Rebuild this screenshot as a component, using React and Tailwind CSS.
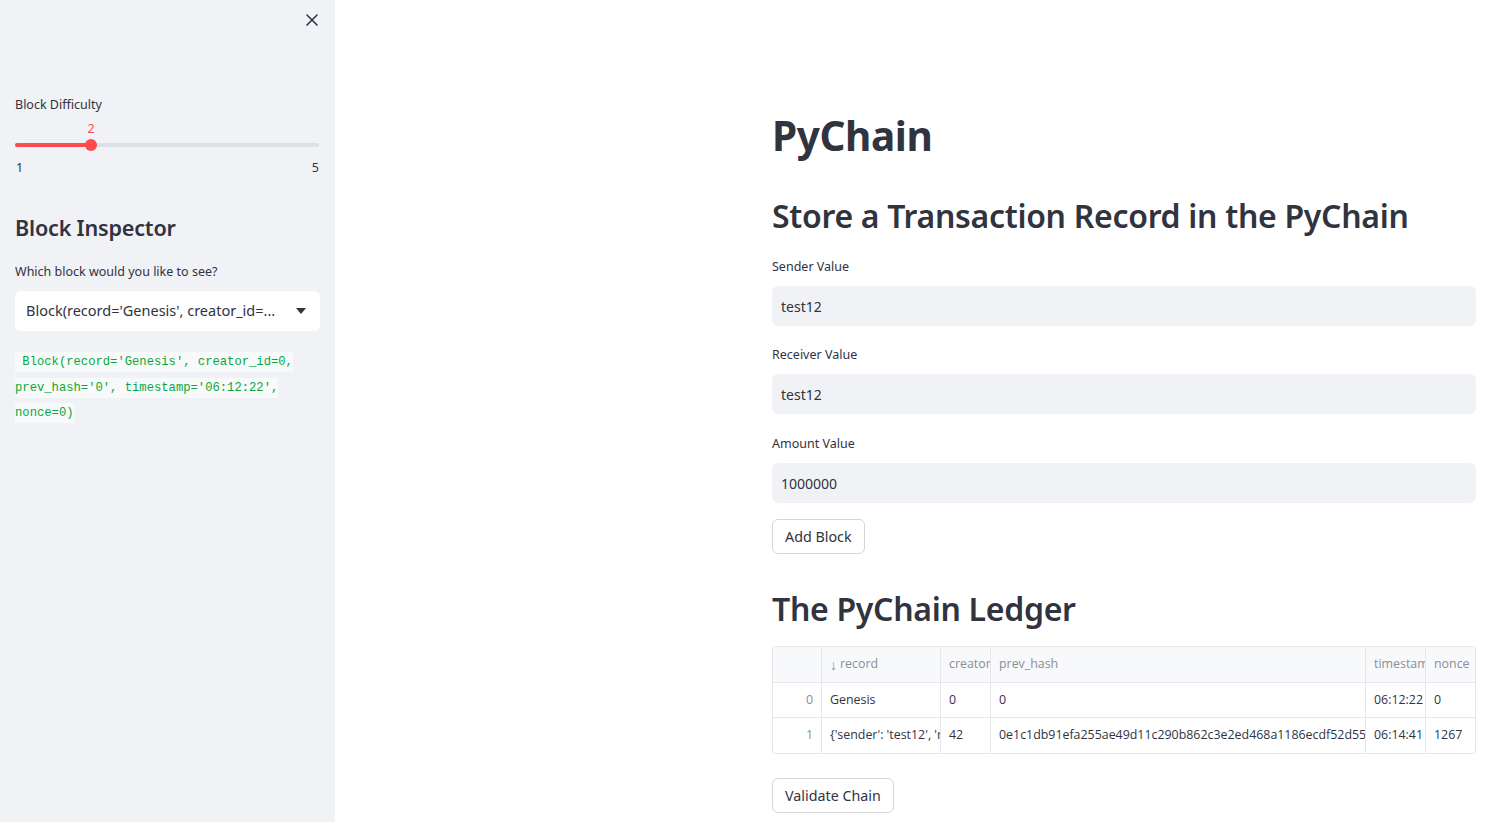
import React from 'react';

const sans = "font-['Noto_Sans','Liberation_Sans',sans-serif]";

const Label = ({ children }) => (
  <div className="text-[12.5px] leading-[20px] text-[#31333f] mb-[9px]">{children}</div>
);

const TextInput = ({ value }) => (
  <div className="h-[40px] rounded-[6px] bg-[#f0f2f6] px-[9px] flex items-center text-[14px] text-[#31333f]">
    {value}
  </div>
);

const Button = ({ children, className = '' }) => (
  <button className={`h-[35px] px-[12px] rounded-[6px] border border-[#d6d6d9] bg-white text-[14.3px] text-[#31333f] ${className}`}>
    {children}
  </button>
);

const rows = [
  { i: 0, record: 'Genesis', creator: '0', hash: '0', ts: '06:12:22', nonce: '0' },
  {
    i: 1,
    record: "{'sender': 'test12', 'receiver': 'test12', 'amount': '1000000'}",
    creator: '42',
    hash: '0e1c1db91efa255ae49d11c290b862c3e2ed468a1186ecdf52d55e1a37f4c6',
    ts: '06:14:41',
    nonce: '1267',
  },
];

const cols = 'grid grid-cols-[49px_119px_50px_375px_60px_minmax(0,1fr)]';
const cell = 'px-[8px] flex items-center overflow-hidden whitespace-nowrap border-r border-[#e6e7ea]';

function Ledger() {
  return (
    <div className="w-full border border-[#e6e7ea] rounded-[4px] overflow-hidden font-['Open_Sans',sans-serif] text-[12.4px] text-[#31333f]">
      <div className={`${cols} h-[36px] bg-[#f8f9fb] text-[#8b8d98] border-b border-[#e6e7ea]`}>
        <div className={cell}></div>
        <div className={cell}><span className="text-[14px] mr-[3px]">↓</span>record</div>
        <div className={cell}>creator_id</div>
        <div className={cell}>prev_hash</div>
        <div className={cell}>timestamp</div>
        <div className={`${cell} border-r-0`}>nonce</div>
      </div>
      {rows.map((r, idx) => (
        <div key={r.i} className={`${cols} ${idx === 0 ? 'h-[35px] border-b border-[#e6e7ea]' : 'h-[35px]'}`}>
          <div className={`${cell} justify-end text-[#8b8d98]`}>{r.i}</div>
          <div className={cell}>{r.record}</div>
          <div className={cell}>{r.creator}</div>
          <div className={cell}>{r.hash}</div>
          <div className={cell}>{r.ts}</div>
          <div className={`${cell} border-r-0`}>{r.nonce}</div>
        </div>
      ))}
    </div>
  );
}

function Sidebar() {
  return (
    <aside className="w-[335px] shrink-0 bg-[#f0f2f6] min-h-screen px-[15px] pt-[8px]">
      <div className="flex justify-end">
        <svg width="24" height="24" viewBox="0 0 24 24" className="mr-[-4px]">
          <path d="M7 7l10 10M17 7L7 17" stroke="#31333f" strokeWidth="1.6" strokeLinecap="round" />
        </svg>
      </div>

      <div className="mt-[63px] text-[12.5px] leading-[20px] text-[#31333f]">Block Difficulty</div>
      <div className="relative h-[60px]">
        <div className="absolute left-[76px] top-[5px] -translate-x-1/2 text-[12.5px] text-[#ff4b4b]">2</div>
        <div className="absolute left-0 right-[1px] top-[28px] h-[4px] rounded-full bg-[#dcdfe5]"></div>
        <div className="absolute left-0 w-[76px] top-[28px] h-[4px] rounded-full bg-[#ff4b4b]"></div>
        <div className="absolute left-[70px] top-[24px] w-[12px] h-[12px] rounded-full bg-[#ff4b4b]"></div>
        <div className="absolute left-[1px] top-[44px] text-[12.5px] text-[#31333f]">1</div>
        <div className="absolute right-[1px] top-[44px] text-[12.5px] text-[#31333f]">5</div>
      </div>

      <h2 className="mt-[38px] text-[21.6px] leading-[30px] font-semibold text-[#31333f] tracking-[-0.2px]">Block Inspector</h2>
      <div className="mt-[19px] text-[12.5px] leading-[20px] text-[#31333f]">Which block would you like to see?</div>
      <div className="mt-[9px] h-[40px] rounded-[6px] bg-white flex items-center justify-between pl-[11px] pr-[14px] text-[14.5px] text-[#31333f]">
        <span className="whitespace-nowrap">Block(record='Genesis', creator_id=...</span>
        <svg width="10" height="6" viewBox="0 0 10 6"><path d="M0 0h10L5 6z" fill="#31333f" /></svg>
      </div>

      <div className="mt-[19px] font-['Liberation_Mono',monospace] text-[12.2px] leading-[25.5px] text-[#09a83a] whitespace-pre">
        <span className="bg-[#f8f9fb] [box-decoration-break:clone] py-[3px]">
          {" Block(record='Genesis', creator_id=0,"}<br />
          {"prev_hash='0', timestamp='06:12:22',"}<br />
          {"nonce=0)"}
        </span>
      </div>
    </aside>
  );
}

export default function App() {
  return (
    <div className={`flex bg-white min-h-screen ${sans}`}>
      <Sidebar />
      <main className="flex-1 min-w-0 pl-[437px] pr-[19px] pt-[106px] text-[#31333f]">
        <h1 className="text-[40.5px] leading-[60px] font-bold tracking-[-0.4px]">PyChain</h1>
        <h2 className="mt-[28px] text-[32px] leading-[44px] font-semibold tracking-[-0.3px]">Store a Transaction Record in the PyChain</h2>

        <div className="mt-[19px]">
          <Label>Sender Value</Label>
          <TextInput value="test12" />
        </div>
        <div className="mt-[19px]">
          <Label>Receiver Value</Label>
          <TextInput value="test12" />
        </div>
        <div className="mt-[20px]">
          <Label>Amount Value</Label>
          <TextInput value="1000000" />
        </div>
        <Button className="mt-[16px]">Add Block</Button>

        <h2 className="mt-[33px] text-[32px] leading-[44px] font-semibold tracking-[-0.3px]">The PyChain Ledger</h2>
        <div className="mt-[15px]">
          <Ledger />
        </div>
        <Button className="mt-[24px]">Validate Chain</Button>
      </main>
    </div>
  );
}
